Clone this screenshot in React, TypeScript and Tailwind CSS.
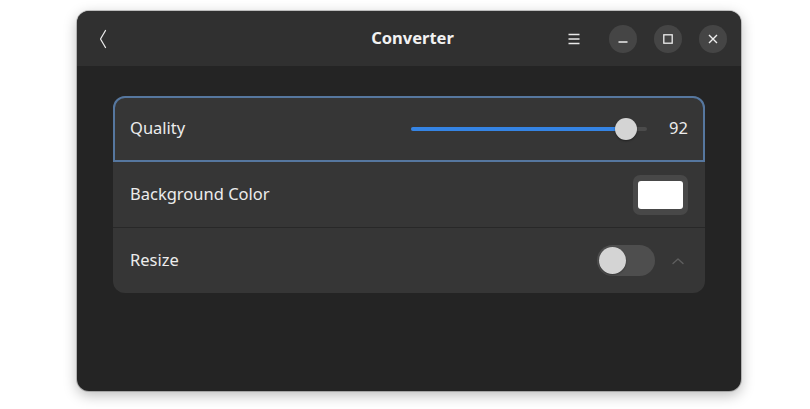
import React from "react";

const FONT = { fontFamily: '"Noto Sans", "Open Sans", sans-serif' };

function BackIcon() {
  return (
    <svg viewBox="0 0 10 20" className="h-[20px] w-[10px]" aria-hidden>
      <path d="M7.5 1.5L2.5 10l5 8.5" fill="none" stroke="#e8e8e8" strokeWidth={1.3} strokeLinecap="round" strokeLinejoin="round" />
    </svg>
  );
}

function MenuIcon() {
  return (
    <svg viewBox="0 0 14 14" className="h-[14px] w-[14px]" aria-hidden>
      <path d="M1.5 2.5h11M1.5 7h11M1.5 11.5h11" stroke="#e8e8e8" strokeWidth={1.4} />
    </svg>
  );
}

function WinButton({ children }: { children: React.ReactNode }) {
  return (
    <button
      type="button"
      className="flex h-[28px] w-[28px] items-center justify-center rounded-full bg-[#454545]"
    >
      {children}
    </button>
  );
}

function Row({
  label,
  children,
  className = "",
}: {
  label: string;
  children?: React.ReactNode;
  className?: string;
}) {
  return (
    <div className={`flex h-[65px] items-center justify-between px-[17px] ${className}`}>
      <span className="-mt-[1px] text-[16.5px] text-[#ececec]">{label}</span>
      <div className="flex items-center">{children}</div>
    </div>
  );
}

export default function App() {
  const quality = 92;

  return (
    <div className="min-h-[409px] w-[810px] bg-white pl-[77px] pt-[11px]" style={FONT}>
      <div className="flex h-[380px] w-[664px] flex-col overflow-hidden rounded-[12px] bg-[#242424] shadow-[0_4px_14px_rgba(0,0,0,0.28)] ring-1 ring-black/20">
        {/* header bar */}
        <div className="flex h-[55px] shrink-0 items-center justify-between bg-[#303030] pl-[21px] pr-[14px]">
          <div className="flex w-[200px] items-center">
            <BackIcon />
          </div>
          <h1 className="-mt-[1px] text-[16.5px] font-bold text-[#f2f2f2]">Converter</h1>
          <div className="flex w-[200px] items-center justify-end gap-[17px]">
            <div className="mr-[11px] flex items-center">
              <MenuIcon />
            </div>
            <WinButton>
              <svg viewBox="0 0 12 12" className="h-[12px] w-[12px]" aria-hidden>
                <path d="M1.5 9h9" stroke="#eeeeee" strokeWidth={1.3} />
              </svg>
            </WinButton>
            <WinButton>
              <svg viewBox="0 0 12 12" className="h-[12px] w-[12px]" aria-hidden>
                <rect x="1.8" y="1.8" width="8.4" height="8.4" fill="none" stroke="#eeeeee" strokeWidth={1.3} />
              </svg>
            </WinButton>
            <WinButton>
              <svg viewBox="0 0 12 12" className="h-[12px] w-[12px]" aria-hidden>
                <path d="M2 2l8 8M10 2l-8 8" stroke="#eeeeee" strokeWidth={1.4} />
              </svg>
            </WinButton>
          </div>
        </div>

        {/* content */}
        <div className="flex-1 px-[36px] pt-[30px]">
          <div className="rounded-[12px] bg-[#363636]">
            <Row
              label="Quality"
              className="h-[66px] rounded-t-[12px] outline-2 -outline-offset-2 outline-[#56779f] outline"
            >
              <div className="relative mr-[22px] h-[4px] w-[236px] rounded-full bg-[#4b4b4b]">
                <div className="absolute left-0 top-0 h-[4px] w-[215px] rounded-full bg-[#3584e4]" />
                <div className="absolute left-[204px] top-[-9px] h-[22px] w-[22px] rounded-full bg-[#d4d4d4] shadow-[0_1px_2px_rgba(0,0,0,0.4)]" />
              </div>
              <span className="-mt-[1px] w-[19px] text-right text-[16.5px] text-[#ececec]">{quality}</span>
            </Row>
            <Row label="Background Color" className="h-[66px] border-b border-[#282828]">
              <div className="flex h-[40px] w-[55px] items-center justify-center rounded-[7px] bg-[#484848]">
                <div className="h-[28px] w-[45px] rounded-[3px] bg-white" />
              </div>
            </Row>
            <Row label="Resize">
              <div className="flex h-[31px] w-[58px] items-center rounded-full bg-[#4e4e4e] px-[2px]">
                <div className="h-[27px] w-[27px] rounded-full bg-[#d4d4d4] shadow-[0_1px_2px_rgba(0,0,0,0.3)]" />
              </div>
              <svg viewBox="0 0 14 8" className="ml-[16px] mr-[3px] h-[8px] w-[14px]" aria-hidden>
                <path d="M2 6.5L7 2l5 4.5" fill="none" stroke="#5e5e5e" strokeWidth={1.4} strokeLinecap="round" strokeLinejoin="round" />
              </svg>
            </Row>
          </div>
        </div>
      </div>
    </div>
  );
}
